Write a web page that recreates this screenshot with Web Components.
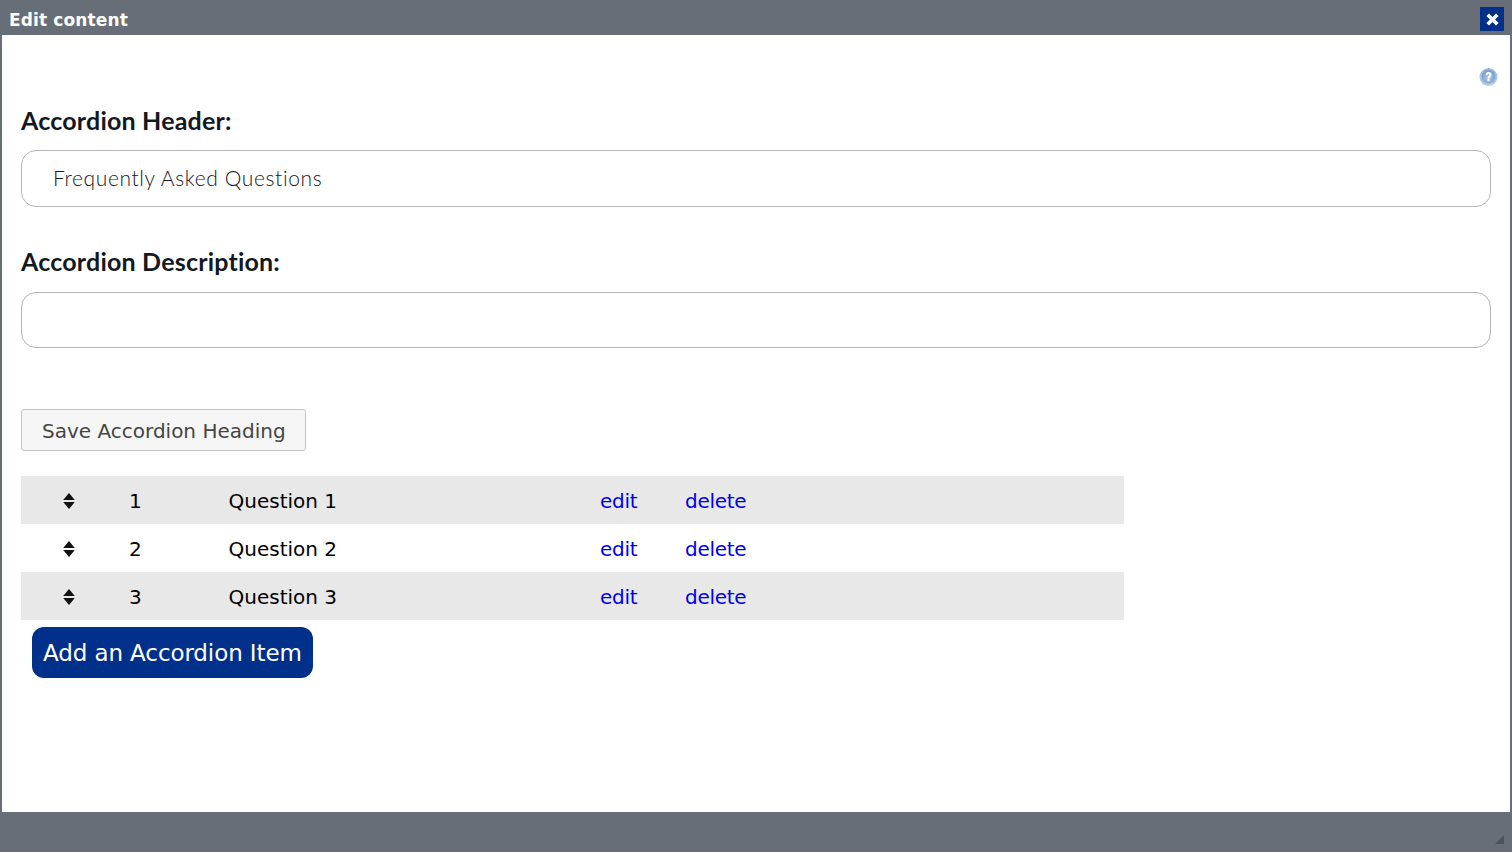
<!DOCTYPE html>
<html>
<head>
<meta charset="utf-8">
<title>Edit content</title>
<style>
html, body { margin: 0; padding: 0; height: 100%; overflow: hidden; background: #686e78; }
</style>
</head>
<body>
<edit-dialog heading="Edit content">
    <form-field label="Accordion Header:" value="Frequently Asked Questions"></form-field>
    <form-field label="Accordion Description:" value="" class="second"></form-field>
    <save-button>Save Accordion Heading</save-button>
    <accordion-table>
        <accordion-row num="1" name="Question 1" shaded></accordion-row>
        <accordion-row num="2" name="Question 2"></accordion-row>
        <accordion-row num="3" name="Question 3" shaded></accordion-row>
    </accordion-table>
    <add-button>Add an Accordion Item</add-button>
</edit-dialog>

<script>
class EditDialog extends HTMLElement {
    connectedCallback() {
        this.attachShadow({ mode: 'open' });
        this.shadowRoot.innerHTML = `
            <style>
                :host {
                    display: flex;
                    flex-direction: column;
                    width: 1512px;
                    height: 852px;
                    background: #686e78;
                    font-family: "DejaVu Sans", Verdana, sans-serif;
                }
                .titlebar {
                    height: 35px;
                    flex: none;
                    display: flex;
                    align-items: center;
                    justify-content: space-between;
                    padding: 3px 8px 0 9px;
                    box-sizing: border-box;
                }
                .title {
                    color: #fff;
                    font-weight: 700;
                    font-size: 17px;
                    letter-spacing: 0.13px;
                    position: relative;
                    top: 1px;
                }
                .close {
                    width: 24px;
                    height: 24px;
                    background: #00308a;
                    display: flex;
                    align-items: center;
                    justify-content: center;
                }
                .close svg { margin: 1px 0 0 1px; }
                .body {
                    flex: 1;
                    margin: 0 2px;
                    background: #fff;
                    padding: 0 19px;
                    position: relative;
                }
                .help { position: absolute; top: 33px; right: 12px; }
                .foot {
                    height: 40px;
                    flex: none;
                    display: flex;
                    justify-content: flex-end;
                    align-items: flex-end;
                    padding: 0 8px 8px 0;
                    box-sizing: border-box;
                }
            </style>
            <div class="titlebar">
                <span class="title">${this.getAttribute('heading')}</span>
                <span class="close">
                    <svg width="13" height="13" viewBox="0 0 13 13"><path d="M3 .4 6.5 3.9 10 .4 12.6 3 9.1 6.5 12.6 10 10 12.6 6.5 9.1 3 12.6 .4 10 3.9 6.5 .4 3Z" fill="#fff"/></svg>
                </span>
            </div>
            <div class="body">
                <svg class="help" width="19" height="18" viewBox="0 0 19 18">
                    <defs>
                        <linearGradient id="ring" x1="0" y1="0" x2="0" y2="1"><stop offset="0" stop-color="#9dbade"/><stop offset="1" stop-color="#b4cbe6"/></linearGradient>
                        <radialGradient id="core" cx="0.5" cy="0.6" r="0.7"><stop offset="0" stop-color="#b4cbe6"/><stop offset="0.65" stop-color="#7fa3d1"/><stop offset="1" stop-color="#6f95c6"/></radialGradient>
                    </defs>
                    <circle cx="9.5" cy="9" r="9" fill="url(#ring)"/>
                    <circle cx="9.5" cy="8.6" r="6.8" fill="url(#core)"/>
                    <path d="M6.5 7C6.6 5 7.9 4 9.6 4 11.4 4 12.7 5.1 12.7 6.7 12.7 8.6 10.6 8.7 10.6 10.5H8.5C8.5 8.1 10.4 8 10.4 6.8 10.4 6.2 10.1 5.9 9.5 5.9 8.9 5.9 8.6 6.3 8.5 7Z" fill="#fff"/>
                    <rect x="8.5" y="11.1" width="2.1" height="2.1" fill="#fff"/>
                </svg>
                <slot></slot>
            </div>
            <div class="foot">
                <svg width="9" height="9" viewBox="0 0 9 9"><path d="M9 0V9H0Z" fill="#4e5359"/></svg>
            </div>
        `;
    }
}

class FormField extends HTMLElement {
    connectedCallback() {
        this.attachShadow({ mode: 'open' });
        this.shadowRoot.innerHTML = `
            <style>
                :host {
                    display: block;
                    font-family: Lato, "Open Sans", sans-serif;
                    padding-top: 70px;
                }
                :host(.second) { padding-top: 39px; }
                label {
                    display: block;
                    font-size: 25px;
                    line-height: 30px;
                    font-weight: 700;
                    letter-spacing: 0.2px;
                    color: #14191f;
                    margin-bottom: 15px;
                }
                :host(.second) label { margin-bottom: 16px; }
                .input {
                    box-sizing: border-box;
                    height: 57px;
                    border: 1px solid #b4b4b9;
                    border-radius: 15px;
                    padding: 0 31px 2px;
                    display: flex;
                    align-items: center;
                    font-size: 21px;
                    font-weight: 300;
                    color: #14191f;
                    letter-spacing: 0.62px;
                }
                :host(.second) .input { height: 56px; }
            </style>
            <label>${this.getAttribute('label')}</label>
            <div class="input">${this.getAttribute('value')}</div>
        `;
    }
}

class SaveButton extends HTMLElement {
    connectedCallback() {
        this.attachShadow({ mode: 'open' });
        this.shadowRoot.innerHTML = `
            <style>
                :host {
                    display: block;
                    box-sizing: border-box;
                    margin-top: 61px;
                    height: 42px;
                    line-height: 42px;
                    padding: 0 20px;
                    width: 285px;
                    background: #f6f6f6;
                    border: 1px solid #c5c5c5;
                    border-radius: 3px;
                    color: #454545;
                    font-family: "DejaVu Sans", Verdana, sans-serif;
                    font-size: 20px;
                    white-space: nowrap;
                }
            </style>
            <slot></slot>
        `;
    }
}

class AccordionTable extends HTMLElement {
    connectedCallback() {
        this.attachShadow({ mode: 'open' });
        this.shadowRoot.innerHTML = `
            <style>
                :host { display: block; width: 1103px; margin-top: 25px; }
            </style>
            <slot></slot>
        `;
    }
}

class AccordionRow extends HTMLElement {
    connectedCallback() {
        this.attachShadow({ mode: 'open' });
        this.shadowRoot.innerHTML = `
            <style>
                :host {
                    display: grid;
                    grid-template-columns: 108px 99.5px 371.5px 85px 1fr;
                    align-items: center;
                    box-sizing: border-box;
                    height: 48px;
                    padding-top: 2px;
                    font-family: "DejaVu Sans", Verdana, sans-serif;
                    font-size: 20px;
                    color: #000;
                }
                :host([shaded]) { background: #e8e8e8; }
                .sort { display: flex; justify-content: center; width: 96px; }
                a { color: #0000ee; text-decoration: none; letter-spacing: -0.3px; }
            </style>
            <span class="sort">
                <svg width="12" height="16" viewBox="0 0 12 16"><path d="M6 0 11.8 7H.2ZM.2 9H11.8L6 16Z" fill="#111"/></svg>
            </span>
            <span>${this.getAttribute('num')}</span>
            <span>${this.getAttribute('name')}</span>
            <a href="#">edit</a>
            <a href="#">delete</a>
        `;
    }
}

class AddButton extends HTMLElement {
    connectedCallback() {
        this.attachShadow({ mode: 'open' });
        this.shadowRoot.innerHTML = `
            <style>
                :host {
                    display: table;
                    box-sizing: border-box;
                    margin: 7px 0 0 11px;
                    height: 51px;
                    line-height: 49px;
                    padding: 2px 11px 0;
                    background: #00308a;
                    border-radius: 12px;
                    color: #fff;
                    font-family: "DejaVu Sans", Verdana, sans-serif;
                    font-size: 23px;
                    letter-spacing: -0.1px;
                }
            </style>
            <slot></slot>
        `;
    }
}

customElements.define('edit-dialog', EditDialog);
customElements.define('form-field', FormField);
customElements.define('save-button', SaveButton);
customElements.define('accordion-table', AccordionTable);
customElements.define('accordion-row', AccordionRow);
customElements.define('add-button', AddButton);
</script>
</body>
</html>
